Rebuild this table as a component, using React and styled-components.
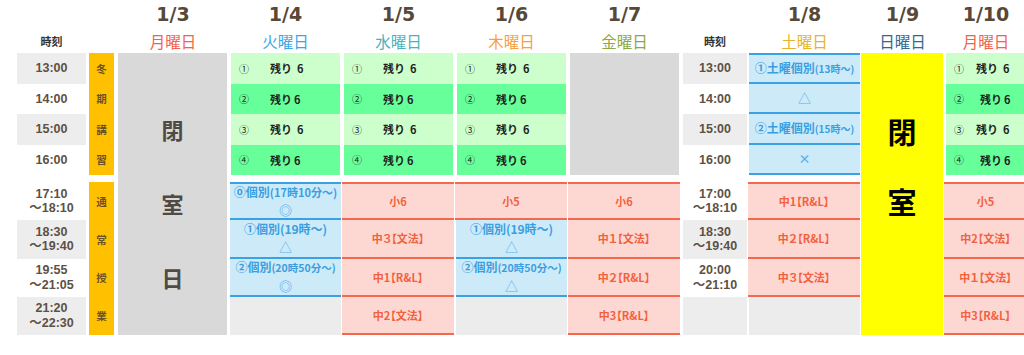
import React from "react";
import styled, { createGlobalStyle, css } from "styled-components";

const GlobalStyle = createGlobalStyle`
  html, body {
    margin: 0;
    background: #ffffff;
    overflow: hidden;
  }
  body {
    font-family: "Noto Sans CJK JP", "Noto Sans", sans-serif;
    color: #222;
  }
`;

// every cell sits on the board grid by column / row (and an optional row span)
const placed = css`
  grid-column: ${(p) => p.$col};
  grid-row: ${(p) => p.$row} / span ${(p) => p.$span || 1};
`;

const Board = styled.div`
  display: grid;
  grid-template-columns: 69px 31px 112px repeat(4, 113px) 67px 113px 83px 84px;
  grid-template-rows: 28px 25px repeat(4, 30.5px) 7px repeat(4, 38.25px);
  width: max-content;
  padding-left: 17px;
`;

const DateLabel = styled.div`
  ${placed}
  display: flex;
  align-items: center;
  justify-content: center;
  font-family: "DejaVu Sans", Verdana, sans-serif;
  font-size: 19px;
  font-weight: 700;
  color: #574837;
`;

const DayName = styled.div`
  ${placed}
  display: flex;
  align-items: center;
  justify-content: center;
  font-size: 15.5px;
  color: ${(p) => p.$color};
`;

const TimeHead = styled.div`
  ${placed}
  display: flex;
  align-items: center;
  justify-content: center;
  margin: ${(p) => p.$inset || 0};
  font-size: 11px;
  font-weight: 700;
  color: #333;
`;

const TimeCell = styled.div`
  ${placed}
  display: flex;
  flex-direction: column;
  align-items: center;
  justify-content: center;
  margin: ${(p) => p.$inset || 0};
  background: ${(p) => (p.$shade ? "#ededed" : "transparent")};
  font-family: "Liberation Sans", "Noto Sans CJK JP", sans-serif;
  font-size: 12.5px;
  font-weight: 700;
  color: #5d5044;
`;

const TimeLine = styled.div`
  height: 14.5px;
  line-height: 14.5px;
`;

const TermStrip = styled.div`
  ${placed}
  display: flex;
  flex-direction: column;
  margin: 0 3px;
  background: #ffc000;
`;

const TermChar = styled.div`
  flex: 1;
  display: flex;
  align-items: center;
  justify-content: center;
  font-size: 10.5px;
  font-weight: 700;
  color: #6b5424;
`;

const Closed = styled.div`
  ${placed}
  display: flex;
  flex-direction: column;
  align-items: center;
  margin: ${(p) => p.$inset};
  padding-top: ${(p) => p.$top}px;
  background: ${(p) => p.$bg};
  color: ${(p) => p.$ink};
  font-size: ${(p) => p.$size}px;
  line-height: ${(p) => p.$lead}px;
  font-weight: 700;
`;

const Blank = styled.div`
  ${placed}
  margin: ${(p) => p.$inset};
  background: ${(p) => p.$bg};
`;

const Slot = styled.div`
  ${placed}
  display: flex;
  align-items: center;
  margin: 0 2px;
  padding-left: 8px;
  background: ${(p) => (p.$strong ? "#66ff99" : "#ccffcc")};
  color: #1e1e1e;
`;

const SlotNo = styled.span`
  width: 10px;
  font-size: 10px;
`;

const Remain = styled.span`
  margin-left: ${(p) => p.$gap}px;
  font-size: 11px;
  font-weight: 700;
`;

const Count = styled.span`
  margin-left: ${(p) => p.$space}px;
`;

const Lesson = styled.div`
  ${placed}
  display: flex;
  align-items: center;
  justify-content: center;
  margin-right: 1px;
  background: #fdd8d3;
  border-top: ${(p) => (p.$first ? "2px solid #f4694e" : "none")};
  border-bottom: 2px solid #f4694e;
  color: #f2613f;
  font-size: 11px;
  font-weight: 700;
  font-feature-settings: "palt";
`;

const Private = styled.div`
  ${placed}
  display: flex;
  flex-direction: column;
  align-items: center;
  justify-content: center;
  margin: 0 1px;
  background: #cdeaf9;
  border-top: ${(p) => (p.$first ? "2px solid #3aa2e2" : "none")};
  border-bottom: 2px solid #3aa2e2;
  color: #3a9fe0;
  font-size: 12px;
  font-weight: 700;
  line-height: 18px;
  white-space: nowrap;
`;

const Note = styled.span`
  font-size: ${(p) => p.$size}px;
`;

const Mark = styled.span`
  font-size: ${(p) => p.$size || 13}px;
  font-weight: ${(p) => (p.$bold ? 700 : 400)};
  color: #58b0ec;
`;

const days = [
  { col: 3, date: "1/3", name: "月曜日", color: "#f4624c" },
  { col: 4, date: "1/4", name: "火曜日", color: "#3aa8e6" },
  { col: 5, date: "1/5", name: "水曜日", color: "#48b3bb" },
  { col: 6, date: "1/6", name: "木曜日", color: "#f8a03e" },
  { col: 7, date: "1/7", name: "金曜日", color: "#89a945" },
  { col: 9, date: "1/8", name: "土曜日", color: "#e6b52c" },
  { col: 10, date: "1/9", name: "日曜日", color: "#2f6a8e" },
  { col: 11, date: "1/10", name: "月曜日", color: "#f4624c" },
];

const weekdayTimes = [
  { row: 3, lines: ["13:00"], shade: true },
  { row: 4, lines: ["14:00"] },
  { row: 5, lines: ["15:00"], shade: true },
  { row: 6, lines: ["16:00"] },
  { row: 8, lines: ["17:10", "～18:10"] },
  { row: 9, lines: ["18:30", "～19:40"], shade: true },
  { row: 10, lines: ["19:55", "～21:05"] },
  { row: 11, lines: ["21:20", "～22:30"], shade: true },
];

const saturdayTimes = [
  { row: 3, lines: ["13:00"], shade: true },
  { row: 4, lines: ["14:00"] },
  { row: 5, lines: ["15:00"], shade: true },
  { row: 6, lines: ["16:00"] },
  { row: 8, lines: ["17:00", "～18:10"] },
  { row: 9, lines: ["18:30", "～19:40"], shade: true },
  { row: 10, lines: ["20:00", "～21:10"] },
  { row: 11, lines: [], shade: true },
];

const lessonCols = [
  { col: 5, items: ["小6", "中３【文法】", "中1【R&L】", "中2【文法】"] },
  { col: 7, items: ["小6", "中１【文法】", "中２【R&L】", "中3【R&L】"] },
  { col: 11, items: ["小5", "中2【文法】", "中１【文法】", "中3【R&L】"] },
];

const marks = ["①", "②", "③", "④"];

function Slots({ col, gaps = [21, 21] }) {
  return marks.map((mark, i) => (
    <Slot key={mark} $col={col} $row={3 + i} $strong={i % 2 === 1}>
      <SlotNo>{mark}</SlotNo>
      <Remain $gap={gaps[i % 2]}>
        残り<Count $space={i % 2 ? 2 : 5}>6</Count>
      </Remain>
    </Slot>
  ));
}

function TimeColumn({ col, times, inset }) {
  return times.map((t) => (
    <TimeCell key={t.row} $col={col} $row={t.row} $shade={t.shade} $inset={inset}>
      {t.lines.map((line) => (
        <TimeLine key={line}>{line}</TimeLine>
      ))}
    </TimeCell>
  ));
}

function Term({ row, text }) {
  return (
    <TermStrip $col={2} $row={row} $span={4}>
      {[...text].map((ch) => (
        <TermChar key={ch}>{ch}</TermChar>
      ))}
    </TermStrip>
  );
}

export default function App() {
  return (
    <>
      <GlobalStyle />
      <Board>
        {days.map((d) => (
          <React.Fragment key={d.date}>
            <DateLabel $col={d.col} $row={1}>{d.date}</DateLabel>
            <DayName $col={d.col} $row={2} $color={d.color}>{d.name}</DayName>
          </React.Fragment>
        ))}
        <TimeHead $col={1} $row={2}>時刻</TimeHead>
        <TimeHead $col={8} $row={2} $inset="0 1px 0 2px">時刻</TimeHead>

        <TimeColumn col={1} times={weekdayTimes} />
        <TimeColumn col={8} times={saturdayTimes} inset="0 1px 0 2px" />

        <Term row={3} text="冬期講習" />
        <Term row={8} text="通常授業" />

        <Closed $col={3} $row={3} $span={9} $inset="0 2px 0 1px" $top={39}
          $bg="#d9d9d9" $ink="#4f4a44" $size={22} $lead={74}>
          <span>閉</span>
          <span>室</span>
          <span>日</span>
        </Closed>
        <Closed $col={10} $row={3} $span={9} $inset="0 1px 0 0" $top={43}
          $bg="#ffff00" $ink="#000000" $size={29} $lead={70}>
          <span>閉</span>
          <span>室</span>
        </Closed>

        <Slots col={4} />
        <Slots col={5} />
        <Slots col={6} />
        <Slots col={11} gaps={[12, 16]} />
        <Blank $col={7} $row={3} $span={4} $inset="0 2px" $bg="#d9d9d9" />

        {/* 1/4 private lessons */}
        <Private $col={4} $row={8} $first>
          <span>⓪個別<Note $size={11}>(17時10分～)</Note></span>
          <Mark $bold>◎</Mark>
        </Private>
        <Private $col={4} $row={9}>
          <span>①個別(19時～)</span>
          <Mark>△</Mark>
        </Private>
        <Private $col={4} $row={10}>
          <span>②個別<Note $size={10.5}>(20時50分～)</Note></span>
          <Mark $bold>◎</Mark>
        </Private>
        <Blank $col={4} $row={11} $inset="0 1px" $bg="#ececec" />

        {/* 1/6 */}
        <Lesson $col={6} $row={8} $first>小5</Lesson>
        <Private $col={6} $row={9}>
          <span>①個別(19時～)</span>
          <Mark>△</Mark>
        </Private>
        <Private $col={6} $row={10}>
          <span>②個別<Note $size={10.5}>(20時50分～)</Note></span>
          <Mark>△</Mark>
        </Private>
        <Blank $col={6} $row={11} $inset="0 1px" $bg="#ececec" />

        {lessonCols.map((c) =>
          c.items.map((item, i) => (
            <Lesson key={`${c.col}-${i}`} $col={c.col} $row={8 + i} $first={i === 0}>
              {item}
            </Lesson>
          ))
        )}

        {/* 1/8 saturday */}
        <Private $col={9} $row={3} $first>
          <span>①土曜個別<Note $size={10}>(13時～)</Note></span>
        </Private>
        <Private $col={9} $row={4}>
          <Mark>△</Mark>
        </Private>
        <Private $col={9} $row={5}>
          <span>②土曜個別<Note $size={10}>(15時～)</Note></span>
        </Private>
        <Private $col={9} $row={6}>
          <Mark $bold $size={12}>×</Mark>
        </Private>
        <Lesson $col={9} $row={8} $first>中1【R&L】</Lesson>
        <Lesson $col={9} $row={9}>中２【R&L】</Lesson>
        <Lesson $col={9} $row={10}>中３【文法】</Lesson>
        <Blank $col={9} $row={11} $inset="0 1px" $bg="#ececec" />
      </Board>
    </>
  );
}
